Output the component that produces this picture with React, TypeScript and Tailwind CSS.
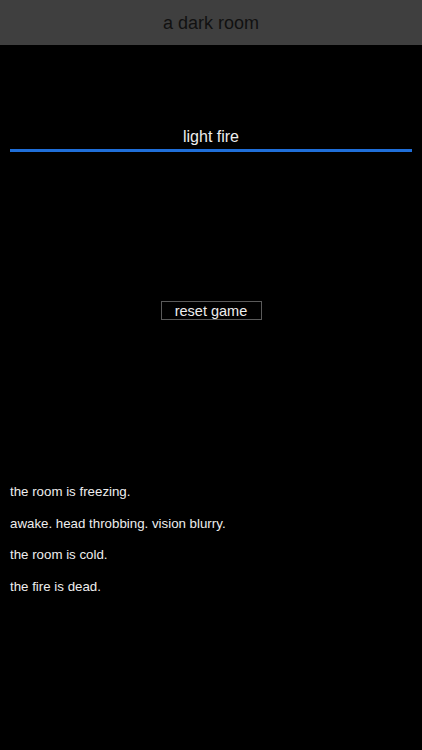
export default function App() {
  const log = [
    "the room is freezing.",
    "awake. head throbbing. vision blurry.",
    "the room is cold.",
    "the fire is dead.",
  ]

  return (
    <div
      className="min-h-[750px] bg-black text-[#eeeeee]"
      style={{ fontFamily: '"Liberation Sans", Arial, sans-serif' }}
    >
      <header className="flex h-[45px] items-center justify-center bg-[#3f3f3f] pt-[2px] text-[18px] text-[#111111]">
        a dark room
      </header>

      <main className="px-[10px]">
        {/* light fire action with cooldown bar */}
        <div className="mt-[81px] flex flex-col">
          <div className="text-center text-[16px] leading-[22px]">light fire</div>
          <div className="mt-[1px] h-[3px] w-full bg-[#1f6ed8]" />
        </div>

        <div className="mt-[149px] flex justify-center">
          <button className="flex h-[19px] w-[101px] items-center justify-center border border-[#5a5a5a] pt-[2px] text-[14.5px] leading-none text-[#eeeeee]">
            reset game
          </button>
        </div>

        <div className="mt-[156px] flex flex-col text-[13.3px] leading-[31.5px]">
          {log.map((line, i) => (
            <div key={i}>{line}</div>
          ))}
        </div>
      </main>
    </div>
  )
}
